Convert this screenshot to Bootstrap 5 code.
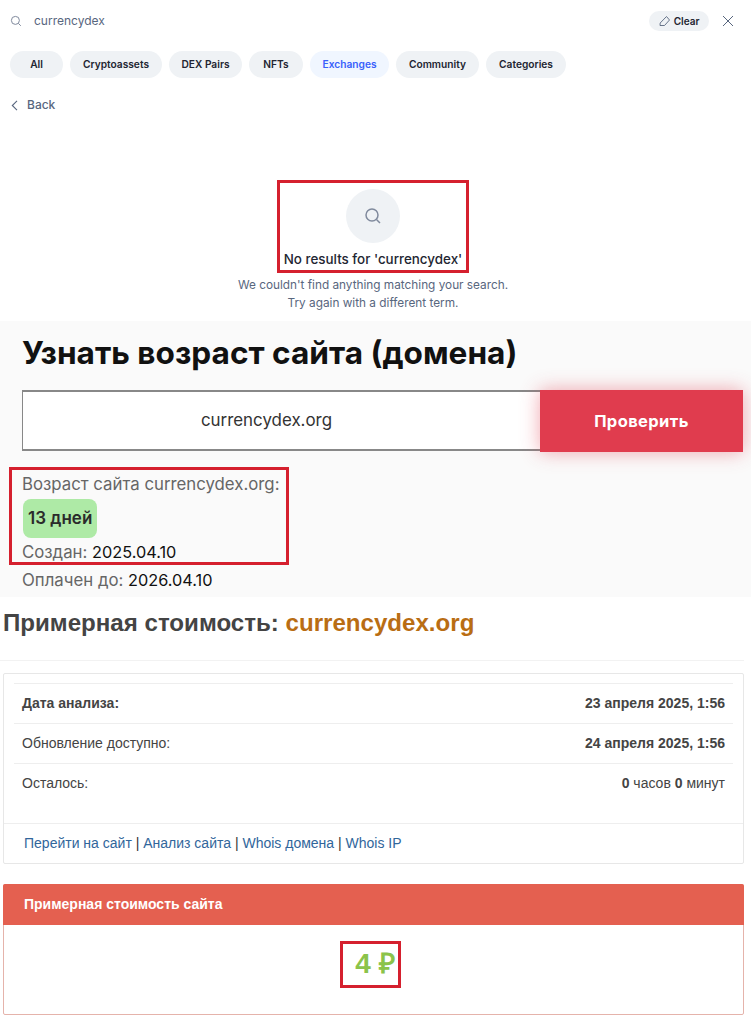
<!DOCTYPE html>
<html lang="ru"><head><meta charset="utf-8">
<title>currencydex</title>
<link href="https://cdn.jsdelivr.net/npm/bootstrap@5.3.0/dist/css/bootstrap.min.css" rel="stylesheet">
<style>
html,body{margin:0;background:#fff}
body{width:751px;height:1024px;overflow:hidden;position:relative;font-family:Inter,"Liberation Sans",sans-serif}
.srch{height:321px;position:relative}
.srow{height:42px;padding:0 17px 0 10px}
.sterm{font-size:12px;color:#58667e;margin-left:12px}
.clr{height:20px;width:60px;border-radius:10px;background:#eff2f5;font-size:10px;font-weight:600;color:#222531;margin-right:13px;gap:3px}
.chips{gap:7px;padding:9px 10px 0;}
.chip{height:27px;border-radius:14px;background:#eff2f5;font-size:10.2px;font-weight:600;color:#222531;display:flex;align-items:center;justify-content:center}
.chip.on{background:#f0f6ff;color:#3861fb}
.back{padding:18px 0 0 11px;font-size:12px;font-weight:500;color:#58667e;gap:9px;line-height:18px}
.empty{padding:75px 5px 0 0}
.circ{width:54px;height:54px;border-radius:50%;background:#eff2f5}
.nores{font-size:13.4px;font-weight:500;color:#222531;margin-top:6px;line-height:20px}
.nosub{font-size:11.8px;color:#58667e;line-height:18px;margin-top:7px}
.agebox{height:276px;background:#fafafa;padding:0 8px 0 22px}
.agebox h1{font-size:31.6px;font-weight:700;color:#111;margin:0;padding-top:12px;line-height:40px}
.ageform{margin-top:17px;height:62px}
.ageinp{flex:1;height:61px;background:#fff;border:2px solid #888;border-left-width:1px;border-right:0;font-size:16.900px;color:#333;display:flex;align-items:center;justify-content:center;padding-right:30px}
.agebtn{width:203px;height:62px;background:#e03c4e;color:#fff;font-weight:700;font-size:16.500px;letter-spacing:.4px;box-shadow:0 0 18px rgba(224,60,78,.45);display:flex;align-items:center;justify-content:center;border:0;border-radius:0}
.agewrap{margin-top:20px}
.agerow{font-size:16.800px;color:#666;line-height:24px}
.agerow b{font-weight:400;color:#111;font-size:16.300px}
.daysb{display:inline-flex;align-items:center;height:39px;padding:0 5px;border-radius:8px;background:#aeeaa6;color:#2b2b2b;font-weight:600;font-size:17px;margin:3px 0 2px 1px}
.lib{font-family:"Liberation Sans",Arial,sans-serif}
.vtitle{font-size:24.1px;font-weight:700;color:#444;line-height:28px;padding:12px 0 0 3px;height:64px;border-bottom:1px solid #f2f2f2;margin-right:7px}
.vtitle span{color:#b96d13}
.vcard{margin:12px 7px 0 3px;border:1px solid #e7e7e7;border-radius:2px;height:191px;font-size:14px;color:#444}
.vrow{margin:0 10px;height:40px;padding:0 8px;border-top:1px solid #eee}
.vfirst{margin-top:9px}
.vlink{margin-top:20px;border-top:1px solid #eee;height:40px;padding-left:20px;color:#31669b;font-size:14px}
.vlink a{color:#31669b;text-decoration:none}
.vlink i{font-style:normal;color:#333}
.rcard{margin:20px 7px 0 3px;border:1px solid #e5b3ab;border-radius:2px;height:131px}
.rhead{height:41px;margin:-1px -1px 0;background:#e46050;color:#fff;font-weight:700;font-size:14px;padding-left:21px;border-radius:2px 2px 0 0}
.rval{font-size:28px;font-weight:700;color:#8bc34a;padding:24px 0 0 3px;line-height:30px}
.mk{position:absolute;border:3px solid #d5202e;pointer-events:none}
.mk1{left:277px;top:180px;width:192px;height:93px}
.mk2{left:9px;top:467px;width:280px;height:98px}
.mk3{left:340px;top:941px;width:61px;height:47px}
</style></head><body>
<section class="srch">
  <div class="srow d-flex align-items-center">
    <svg width="12" height="12" viewBox="0 0 12 12" fill="none" stroke="#808a9d" stroke-width="1"><circle cx="5.4" cy="5.4" r="4"/><path d="M8.4 8.4l2.4 2.4"/></svg>
    <span class="sterm">currencydex</span>
    <span class="clr d-flex align-items-center justify-content-center ms-auto"><svg width="12" height="12" viewBox="0 0 12 12" fill="none" stroke="#58667e" stroke-width=".9"><path d="M1 10.500h4.500l5-5.500L7.500 1.500 1.200 8z"/></svg>Clear</span>
    <svg width="12" height="12" viewBox="0 0 12 12" fill="none" stroke="#58667e" stroke-width="1"><path d="M1 1l10 10M11 1L1 11"/></svg>
  </div>
  <div class="chips d-flex">
    <span class="chip" style="width:53px">All</span>
    <span class="chip" style="width:92px">Cryptoassets</span>
    <span class="chip" style="width:73px">DEX Pairs</span>
    <span class="chip" style="width:54px">NFTs</span>
    <span class="chip on" style="width:79px">Exchanges</span>
    <span class="chip" style="width:83px">Community</span>
    <span class="chip" style="width:80px">Categories</span>
  </div>
  <div class="back d-flex align-items-center"><svg width="7" height="11" viewBox="0 0 7 11" fill="none" stroke="#58667e" stroke-width="1.100"><path d="M6 .8L1.300 5.500 6 10.200"/></svg>Back</div>
  <div class="empty d-flex flex-column align-items-center text-center">
    <div class="circ d-flex align-items-center justify-content-center"><svg width="18" height="18" viewBox="0 0 18 18" fill="none" stroke="#808a9d" stroke-width="1.500"><circle cx="8" cy="8" r="6"/><path d="M12.500 12.500l3.500 3.500"/></svg></div>
    <div class="nores">No results for 'currencydex'</div>
    <div class="nosub">We couldn't find anything matching your search.<br>Try again with a different term.</div>
  </div>
</section>
<section class="agebox">
  <h1>Узнать возраст сайта (домена)</h1>
  <div class="ageform d-flex align-items-start">
    <div class="ageinp">currencydex.org</div>
    <button class="agebtn" type="button">Проверить</button>
  </div>
  <div class="agewrap">
    <div class="agerow">Возраст сайта currencydex.org:</div>
    <div class="daysb">13 дней</div>
    <div class="agerow">Создан: <b>2025.04.10</b></div>
    <div class="agerow mt-1">Оплачен до: <b>2026.04.10</b></div>
  </div>
</section>
<section class="lib">
  <div class="vtitle">Примерная стоимость: <span>currencydex.org</span></div>
  <div class="vcard">
    <div class="vrow vfirst d-flex align-items-center justify-content-between"><b>Дата анализа:</b><b>23 апреля 2025, 1:56</b></div>
    <div class="vrow d-flex align-items-center justify-content-between"><span>Обновление доступно:</span><b>24 апреля 2025, 1:56</b></div>
    <div class="vrow d-flex align-items-center justify-content-between"><span>Осталось:</span><span><b>0</b> часов <b>0</b> минут</span></div>
    <div class="vlink d-flex align-items-center"><a href="#">Перейти на сайт</a>&nbsp;<i>|</i>&nbsp;<a href="#">Анализ сайта</a>&nbsp;<i>|</i>&nbsp;<a href="#">Whois домена</a>&nbsp;<i>|</i>&nbsp;<a href="#">Whois IP</a></div>
  </div>
  <div class="rcard">
    <div class="rhead d-flex align-items-center">Примерная стоимость сайта</div>
    <div class="rval text-center">4 ₽</div>
  </div>
</section>
<div class="mk mk1"></div><div class="mk mk2"></div><div class="mk mk3"></div>
</body></html>
